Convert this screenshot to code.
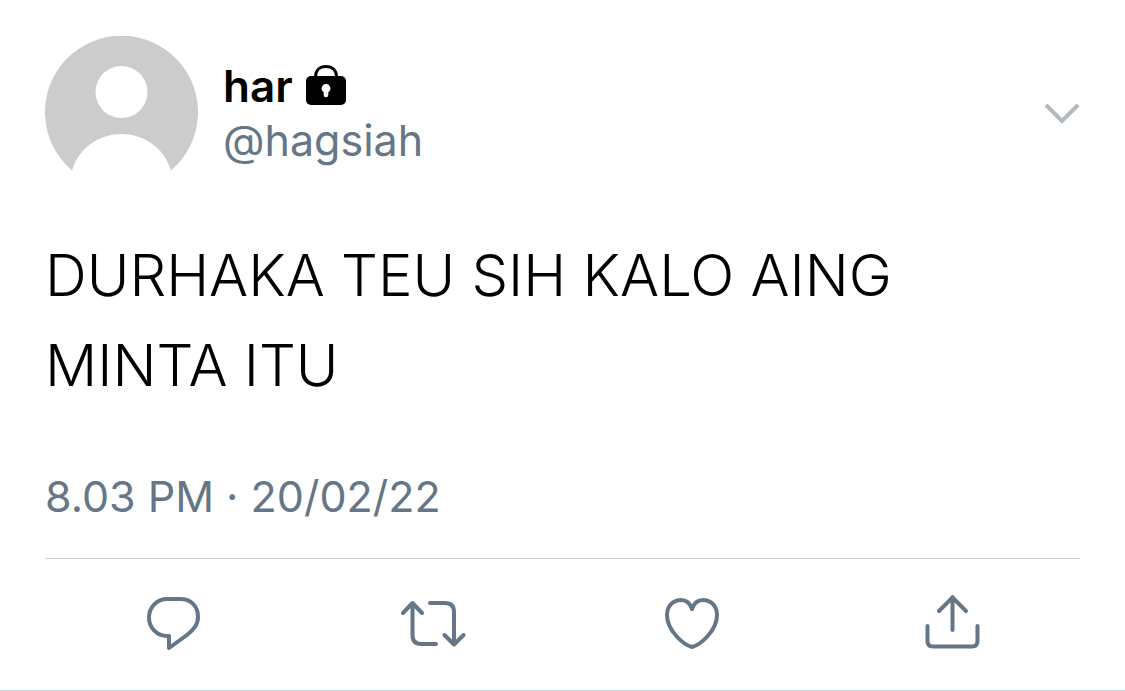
<main class="tweet">
  <header class="author">
    <svg class="avatar" viewBox="0 0 153 153" role="img" aria-label="Profile picture">
      <path fill="#ccc" d="M27 134.500A76.500 76.500 0 1 1 126 134.500C119 111 98 98 76.500 98S34 111 27 134.500Z" />
      <circle cx="76.500" cy="56" r="26" fill="#fff" />
    </svg>
    <div class="names">
      <div class="name">
        <strong>har</strong>
        <svg class="lock" viewBox="0 0 42 42" role="img" aria-label="Protected account">
          <path d="M10.500 13V12C10.500 5 15 1.500 21 1.500S31.500 5 31.500 12V13" fill="none" stroke="#000" stroke-width="3" />
          <rect x="1" y="11" width="40" height="29" rx="5" />
          <path fill="#fff" d="M21 19a4.500 4.500 0 0 1 2.300 8.300V30a2.300 2.300 0 0 1-4.600 0V27.300A4.500 4.500 0 0 1 21 19Z" />
        </svg>
      </div>
      <a class="handle" href="#profile">@hagsiah</a>
    </div>
    <button class="more" aria-label="More options">
      <svg viewBox="0 0 36 22"><path d="M2 3L18 19L34 3" /></svg>
    </button>
  </header>
  <p class="message">DURHAKA TEU SIH KALO AING MINTA ITU</p>
  <time class="date" datetime="2022-02-20T20:03">8.03 PM · 20/02/22</time>
  <footer class="actions">
    <button aria-label="Reply"><svg viewBox="0 0 66 66"><path d="M26 12H39C50 12 57 19 57 30C57 38 52 43 46 48L28 61V49H26C16 49 8 41 8 30.500C8 20 16 12 26 12Z" /></svg></button>
    <button aria-label="Repost"><svg viewBox="0 0 66 66"><path d="M3 26L12.500 16L22 26M12.500 17V48Q12.500 57 21 57H36M30 16H45Q54 16 54 25V56M44.500 48L54 57.500L63.500 48" /></svg></button>
    <button aria-label="Like"><svg viewBox="0 0 66 66"><path d="M33 60C25 58 8 44 8 28C8 19 14 13 22 13C27 13 31 16 33 22C35 16 39 13 44 13C52 13 58 19 58 28C58 44 41 58 33 60Z" /></svg></button>
    <button aria-label="Share"><svg viewBox="0 0 66 66"><path d="M34.500 43V10M21 24L34.500 10.500L48 24M9.500 39V54Q9.500 59.500 15 59.500H54Q59.500 59.500 59.500 54V39" /></svg></button>
  </footer>
</main>

<style>
  :global(body) { margin: 0; background: #fff; }
  .tweet { padding: 36px 45px; border-bottom: 1px solid #ccd6dd; font-family: Inter, sans-serif; color: #000; }
  .author { display: flex; align-items: center; gap: 25px; }
  .avatar { width: 153px; height: 153px; flex: none; }
  .names { flex: 1; }
  .name { display: flex; align-items: center; gap: 12px; font-size: 44px; line-height: 54px; }
  .name strong { font-weight: 600; }
  .lock { width: 42px; height: 42px; }
  .handle { color: #657786; font-size: 43px; line-height: 54px; text-decoration: none; }
  button { display: flex; border: 0; padding: 0; background: none; cursor: pointer; }
  svg { display: block; }
  .more svg { width: 36px; height: 22px; fill: none; stroke: #b2b9c0; stroke-width: 4; }
  .message { margin: 41px 0 0; max-width: 900px; font-size: 58px; line-height: 90px; font-weight: 300; }
  .date { display: block; margin-top: 57px; color: #657786; font-size: 43px; line-height: 58px; }
  .actions { display: flex; justify-content: space-around; margin-top: 33px; padding: 28px 0 1px; border-top: 1px solid #ccd2d6; }
  .actions svg { width: 66px; height: 66px; fill: none; stroke: #657786; stroke-width: 4; stroke-linecap: round; stroke-linejoin: round; }
</style>
